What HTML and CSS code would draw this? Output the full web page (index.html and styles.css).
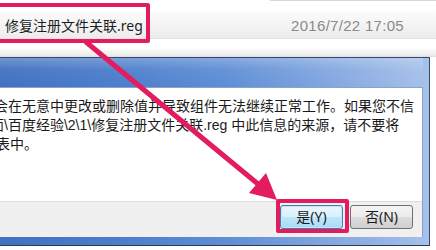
FILE: index.html
```html
<!DOCTYPE html>
<html lang="zh-CN">
<head>
<meta charset="utf-8">
<title>修复注册文件关联</title>
<link rel="stylesheet" href="styles.css">
</head>
<body>
<div class="screen">
  <div class="explorer">
    <div class="topline"></div>
    <div class="row">
      <span class="fname">修复注册文件关联.reg</span>
      <span class="date">2016/7/22 17:05</span>
    </div>
  </div>
  <div class="dialog">
    <div class="titlebar"></div>
    <div class="client">
      <div class="message">
        <p class="l1">会在无意中更改或删除值并导致组件无法继续正常工作。如果您不信</p>
        <p class="l2">面\百度经验\2\1\修复注册文件关联.reg 中此信息的来源，请不要将</p>
        <p class="l3">表中。</p>
      </div>
      <div class="buttons">
        <button class="btn btn-default">是(Y)</button>
        <button class="btn">否(N)</button>
      </div>
    </div>
  </div>
  <div class="mark mark-file"></div>
  <div class="mark mark-yes"></div>
  <svg class="arrow" width="436" height="250" viewBox="0 0 436 250">
    <line x1="86" y1="42" x2="258" y2="184" stroke="#e31c5f" stroke-width="5" stroke-linecap="round"/>
    <polygon points="277,200 249,193 266,173" fill="#e31c5f"/>
  </svg>
</div>
</body>
</html>
```

FILE: styles.css
```css
html, body {
  margin: 0;
  padding: 0;
  background: #ffffff;
}
.screen {
  position: relative;
  width: 436px;
  height: 250px;
  overflow: hidden;
  background: #ffffff;
  font-family: "Noto Sans", "Noto Sans CJK SC", sans-serif;
}
.explorer {
  height: 57px;
  background: linear-gradient(to bottom, #ffffff 0, #ffffff 48px, #e9e9e9 56px, #d8d8d8 57px);
}
.topline {
  height: 1px;
  margin-left: 270px;
  background: #d6d6d6;
}
.row {
  margin-top: 11px;
  height: 26px;
  display: flex;
  align-items: center;
  background: linear-gradient(to bottom, #fbfbfb, #ececec);
  border-bottom: 1px solid #e2e2e2;
}
.fname {
  padding-left: 5px;
  font-size: 14px;
  color: #1e1e1e;
}
.date {
  margin-left: auto;
  padding-right: 32px;
  font-family: "Liberation Sans", sans-serif;
  font-size: 15px;
  letter-spacing: 0.3px;
  color: #8a8a8a;
}
.dialog {
  margin-left: -20px;
  width: 443px;
  padding: 0 6px 8px 0;
  border-top: 1px solid #34496b;
  border-right: 1px solid #34496b;
  border-bottom: 1px solid #2b3a55;
  background: linear-gradient(to right, #3f6fbe 0, #4c7dcb 30%, #5f8ed6 55%, #86a9e0 80%, #a6c1ea 100%);
}
.titlebar {
  height: 29px;
  background: linear-gradient(to bottom, rgba(255,255,255,0.25) 0, rgba(255,255,255,0.05) 40%, rgba(255,255,255,0) 100%);
}
.client {
  background: #ffffff;
  border-top: 1px solid #8aa3c8;
  border-right: 1px solid #8aa3c8;
  margin-left: 6px;
}
.message {
  height: 104px;
  padding: 9px 0 0 8px;
  overflow: hidden;
  white-space: nowrap;
}
.message p {
  margin: 0;
  font-family: "Liberation Sans", "Noto Sans CJK SC", sans-serif;
  font-size: 14px;
  line-height: 19px;
  color: #1a1a1a;
}
.message .l2 {
  margin-left: -4px;
}
.message .l3 {
  margin-left: 2px;
}
.buttons {
  height: 32px;
  padding-top: 3px;
  padding-right: 9px;
  display: flex;
  justify-content: flex-end;
  align-items: flex-start;
  gap: 7px;
  background: #f0f0f0;
  border-top: 1px solid #dcdcdc;
}
.btn {
  width: 63px;
  height: 24px;
  padding: 0;
  border: 1px solid #707070;
  border-radius: 3px;
  background: linear-gradient(to bottom, #f4f4f4 0, #ebebeb 50%, #dddddd 51%, #cfcfcf 100%);
  font-family: "Noto Sans", "Noto Sans CJK SC", sans-serif;
  font-size: 14px;
  line-height: 20px;
  color: #1a1a1a;
}
.btn-default {
  border-color: #3c7fb1;
  box-shadow: inset 0 0 0 1px #c6e6f8;
  background: linear-gradient(to bottom, #eaf6fd 0, #d9f0fc 50%, #bee6fd 51%, #a7d9f5 100%);
}
.mark {
  position: absolute;
  border: 4px solid #e31c5f;
  border-radius: 2px;
  box-sizing: border-box;
}
.mark-file {
  left: -10px;
  top: 3px;
  width: 160px;
  height: 40px;
}
.mark-yes {
  left: 276px;
  top: 199px;
  width: 73px;
  height: 34px;
}
.arrow {
  position: absolute;
  left: 0;
  top: 0;
  pointer-events: none;
}
```
